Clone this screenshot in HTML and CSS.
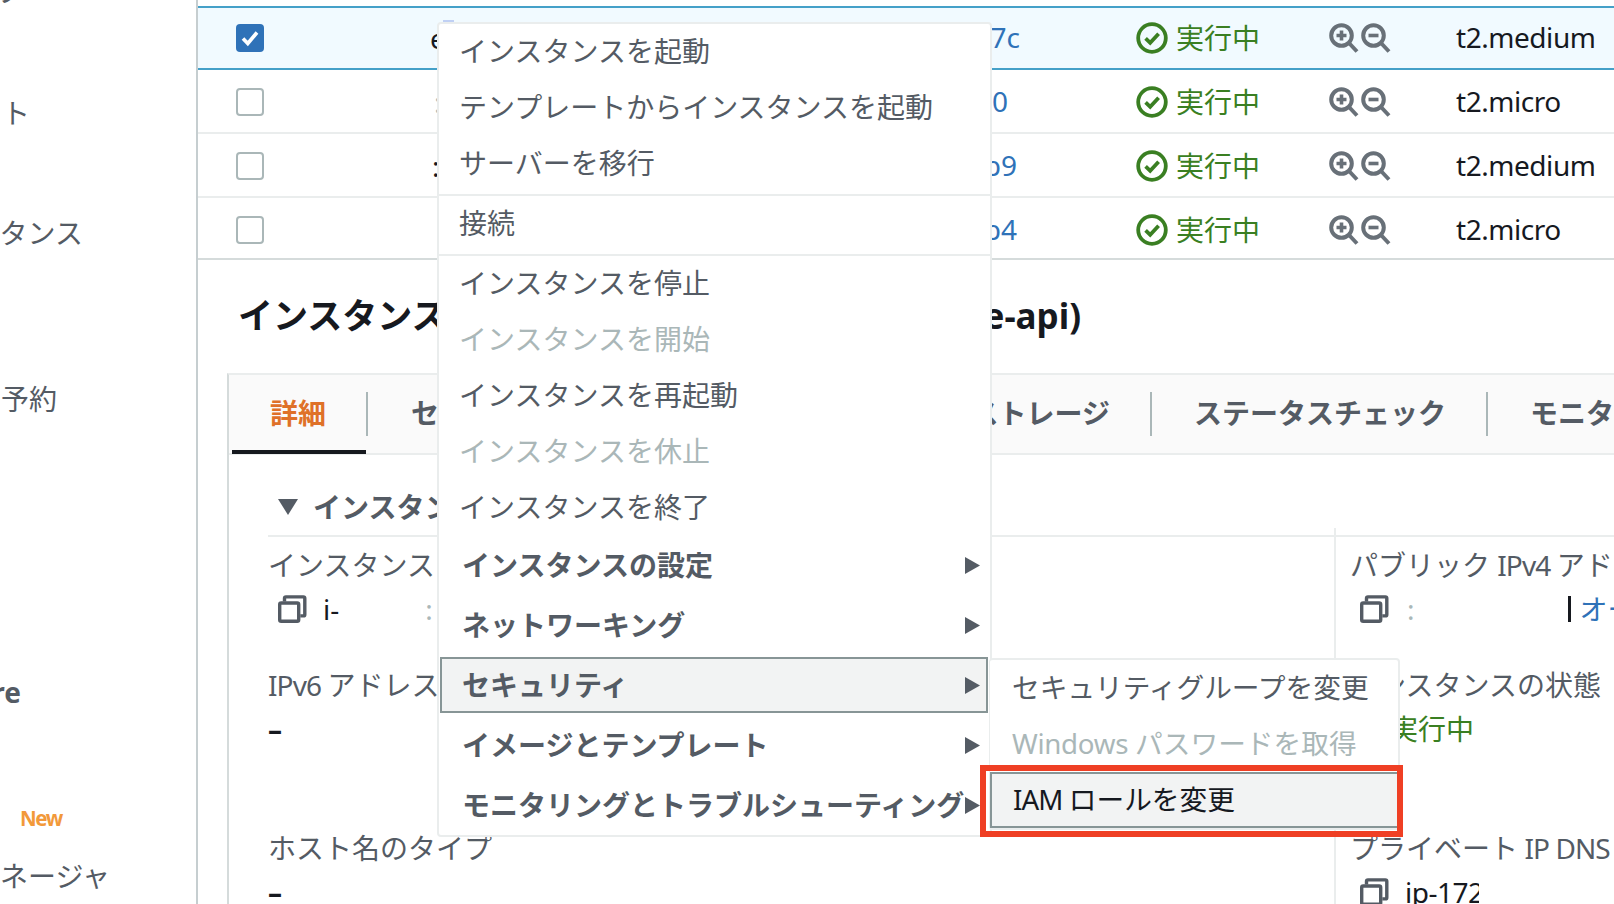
FILE: index.html
```html
<!DOCTYPE html>
<html lang="ja">
<head>
<meta charset="utf-8">
<title>EC2 インスタンス</title>
<link rel="stylesheet" href="styles.css">
</head>
<body>
<svg class="defs" width="0" height="0" aria-hidden="true">
  <symbol id="ok" viewBox="0 0 32 32"><circle cx="16" cy="16" r="13.8" fill="none" stroke="currentColor" stroke-width="3.8"/><path d="M9.600 16.400l4.600 4.400 8.400-9" fill="none" stroke="currentColor" stroke-width="3.800"/></symbol>
  <symbol id="zin" viewBox="0 0 30 30"><circle cx="12.500" cy="12.500" r="10.300" fill="none" stroke="currentColor" stroke-width="4"/><path d="M20 20l8 8.500" stroke="currentColor" stroke-width="4" fill="none"/><path d="M7.500 12.500h10M12.500 7.500v10" stroke="currentColor" stroke-width="3.600" fill="none"/></symbol>
  <symbol id="zout" viewBox="0 0 30 30"><circle cx="12.500" cy="12.500" r="10.300" fill="none" stroke="currentColor" stroke-width="4"/><path d="M20 20l8 8.500" stroke="currentColor" stroke-width="4" fill="none"/><path d="M7.500 12.500h10" stroke="currentColor" stroke-width="3.600" fill="none"/></symbol>
  <symbol id="copy" viewBox="0 0 29 28"><rect x="1.700" y="8" width="19" height="18.300" rx="1.500" fill="none" stroke="currentColor" stroke-width="3.400"/><path d="M6.500 6.500V3.400a1.500 1.500 0 0 1 1.500-1.500h17.300a1.500 1.500 0 0 1 1.500 1.500v16a1.500 1.500 0 0 1-1.500 1.500h-3" fill="none" stroke="currentColor" stroke-width="3.400"/></symbol>
  <symbol id="arrow" viewBox="0 0 15 17"><path d="M0 0l15 8.500L0 17z" fill="currentColor"/></symbol>
</svg>

<div class="page">
  <nav class="sidebar">
    <div class="nav n0 w24">インスタンスタイプ</div>
    <div class="nav n1 w30">スポットリクエスト</div>
    <div class="nav n2 w83">リザーブドインスタンス</div>
    <div class="nav n3 w57">キャパシティー予約</div>
    <div class="nav n4 w21 strong">Elastic Block Store</div>
    <div class="nav n5 new">New</div>
    <div class="nav n6 w110">ライフサイクルマネージャ</div>
  </nav>

  <main class="main">
    <section class="table">
      <div class="row selected">
        <div class="c-check"><span class="check on"><svg width="22" height="22" viewBox="0 0 22 22"><path d="M4 11.500l4.800 5L18 5.500" fill="none" stroke="#fff" stroke-width="3.600"/></svg></span></div>
        <div class="c-name"><span class="mark"></span>e</div>
        <div class="c-id end2">i-07c</div>
        <div class="c-status"><svg class="ok"><use href="#ok"/></svg>実行中</div>
        <div class="c-zoom"><svg class="z"><use href="#zin"/></svg><svg class="z"><use href="#zout"/></svg></div>
        <div class="c-type">t2.medium</div>
      </div>
      <div class="row">
        <div class="c-check"><span class="check"></span></div>
        <div class="c-name faint">:</div>
        <div class="c-id end14">i-010</div>
        <div class="c-status"><svg class="ok"><use href="#ok"/></svg>実行中</div>
        <div class="c-zoom"><svg class="z"><use href="#zin"/></svg><svg class="z"><use href="#zout"/></svg></div>
        <div class="c-type">t2.micro</div>
      </div>
      <div class="row">
        <div class="c-check"><span class="check"></span></div>
        <div class="c-name dots">:</div>
        <div class="c-id end5">i-0b9</div>
        <div class="c-status"><svg class="ok"><use href="#ok"/></svg>実行中</div>
        <div class="c-zoom"><svg class="z"><use href="#zin"/></svg><svg class="z"><use href="#zout"/></svg></div>
        <div class="c-type">t2.medium</div>
      </div>
      <div class="row last">
        <div class="c-check"><span class="check"></span></div>
        <div class="c-name"></div>
        <div class="c-id end5">i-0b4</div>
        <div class="c-status"><svg class="ok"><use href="#ok"/></svg>実行中</div>
        <div class="c-zoom"><svg class="z"><use href="#zin"/></svg><svg class="z"><use href="#zout"/></svg></div>
        <div class="c-type">t2.micro</div>
      </div>
    </section>

    <section class="detail">
      <h1 class="title"><span>インスタンス: i-0</span><span>(service-api)</span></h1>
      <div class="card">
        <div class="tabs">
          <div class="tab active">詳細</div>
          <div class="tab">セキュリティ</div>
          <div class="tab">ネットワーキング</div>
          <div class="tab">ストレージ</div>
          <div class="tab">ステータスチェック</div>
          <div class="tab">モニタリング</div>
          <div class="tab">タグ</div>
        </div>
        <div class="body">
          <h2 class="heading"><svg class="tri" width="20" height="16" viewBox="0 0 20 16"><path d="M0 0h20L10 16z" fill="currentColor"/></svg>インスタンスの概要</h2>
          <div class="fields">
            <div class="col left">
              <div class="field"><div class="label">インスタンス ID</div><div class="value"><svg class="copy"><use href="#copy"/></svg><span class="ink">i-</span><span class="gap-a">:</span></div></div>
              <div class="field"><div class="label"><span class="lat">IPv6 </span>アドレス</div><div class="value dash">–</div></div>
              <div class="field"><div class="label">ホスト名のタイプ</div><div class="value dash">–</div></div>
            </div>
            <div class="col right">
              <div class="field"><div class="label">パブリック <span class="lat">IPv4 </span>アドレス</div><div class="value"><svg class="copy"><use href="#copy"/></svg><span class="gap-b">:</span><span class="pipe"></span><a class="link">オープンアドレス</a></div></div>
              <div class="field"><div class="label">インスタンスの状態</div><div class="value green"><svg class="ok"><use href="#ok"/></svg>実行中</div></div>
              <div class="field"><div class="label">プライベート<span class="lat"> IP DNS </span>名</div><div class="value"><svg class="copy"><use href="#copy"/></svg><span class="clip ink">ip-172-31</span></div></div>
            </div>
          </div>
        </div>
      </div>
    </section>
  </main>
</div>

<div class="menu">
  <div class="group">
    <div class="item">インスタンスを起動</div>
    <div class="item">テンプレートからインスタンスを起動</div>
    <div class="item">サーバーを移行</div>
  </div>
  <div class="group">
    <div class="item">接続</div>
  </div>
  <div class="group">
    <div class="item">インスタンスを停止</div>
    <div class="item off">インスタンスを開始</div>
    <div class="item">インスタンスを再起動</div>
    <div class="item off">インスタンスを休止</div>
    <div class="item">インスタンスを終了</div>
  </div>
  <div class="parents">
    <div class="parent">インスタンスの設定<svg class="arrow"><use href="#arrow"/></svg></div>
    <div class="parent">ネットワーキング<svg class="arrow"><use href="#arrow"/></svg></div>
    <div class="parent open">セキュリティ<svg class="arrow"><use href="#arrow"/></svg></div>
    <div class="parent">イメージとテンプレート<svg class="arrow"><use href="#arrow"/></svg></div>
    <div class="parent">モニタリングとトラブルシューティング<svg class="arrow"><use href="#arrow"/></svg></div>
  </div>
</div>

<div class="submenu">
  <div class="item">セキュリティグループを変更</div>
  <div class="item off"><span class="lat2">Windows </span>パスワードを取得</div>
  <div class="item hover"><span class="lat">IAM </span>ロールを変更</div>
</div>
<div class="callout"></div>
</body>
</html>
```

FILE: styles.css
```css
* { box-sizing: border-box; }
html, body { margin: 0; height: 904px; overflow: hidden; background: #fff; }
body {
  position: relative;
  font-family: "Noto Sans", "Noto Sans CJK JP", sans-serif;
  font-size: 28px;
  line-height: 40px;
  color: #545b64;
}
.defs { position: absolute; }
svg { display: block; flex: none; }
.lat { letter-spacing: -0.9px; white-space: pre; }
.lat2 { letter-spacing: -0.3px; white-space: pre; }

.page { display: flex; height: 904px; width: 1614px; overflow: hidden; }

.sidebar { width: 196px; flex: none; overflow: hidden; display: flex; flex-direction: column; }
.nav { display: flex; justify-content: flex-end; white-space: nowrap; height: 40px; flex: none; }
.n0 { margin-top: -29px; }
.n1 { margin-top: 82px; }
.n2 { margin-top: 80px; }
.n3 { margin-top: 126px; }
.n4 { margin-top: 253px; }
.n5 { margin: 86px 0 0 20px; font-size: 20.500px; letter-spacing: -1.400px; font-weight: 700; color: #f2993a; justify-content: flex-start; }
.n6 { margin-top: 18px; }
.w21 { width: 21px; }
.w24 { width: 24px; }
.w30 { width: 30px; }
.w57 { width: 57px; }
.w83 { width: 83px; }
.w110 { width: 110px; }
.strong { font-weight: 700; }

.main { flex: 1; min-width: 0; border-left: 2px solid #c6ced0; overflow: hidden; }

/* table */
.table { padding-top: 6px; }
.row { display: flex; align-items: center; height: 64px; padding-top: 2px; border-bottom: 2px solid #eaeded; white-space: nowrap; }
.row.selected {
  margin-left: -2px;
  padding-top: 0;
  background: #f1faff;
  border: 2px solid #44a0c8;
  border-right: 0;
}
.row.last { height: 62px; padding-top: 4px; border-bottom-color: #d5dbdb; }
.c-check { width: 232px; flex: none; padding-left: 38px; }
.check { display: flex; align-items: center; justify-content: center; width: 28px; height: 28px; background: #fff; border: 2.500px solid #aab7b8; border-radius: 4px; }
.check.on { background: #2f72b8; border: 0; }
.c-name { position: relative; width: 370px; flex: none; color: #16191f; }
.c-name.faint { color: #aab7b8; padding-left: 4px; }
.c-name.dots { padding-left: 2px; }
.mark { position: absolute; left: 13px; top: 2px; width: 11px; height: 4px; background: #c0d0f4; }
.c-id { width: 222px; flex: none; padding-bottom: 2px; text-align: right; color: #2f72b8; }
.end2 { padding-right: 2px; }
.end14 { padding-right: 14px; }
.end5 { padding-right: 5px; }
.c-status { display: flex; align-items: center; gap: 8px; width: 193px; margin-left: 114px; flex: none; color: #3a7f22; }
.ok { width: 32px; height: 32px; color: #3a7f22; }
.c-zoom { display: flex; gap: 2px; width: 127px; flex: none; color: #687078; }
.z { width: 30px; height: 30px; }
.c-type { flex: none; padding-bottom: 2px; letter-spacing: -0.450px; color: #16191f; }

/* detail panel */
.detail { padding: 34px 0 0 29px; }
.title {
  display: flex;
  justify-content: space-between;
  width: 854px;
  margin: 0 0 35px;
  padding-left: 11px;
  font-size: 35px;
  line-height: 44px;
  font-weight: 700;
  color: #16191f;
  white-space: nowrap;
}
.card { width: 1500px; border-top: 2px solid #eaeded; border-left: 2px solid #d5dbdb; }
.tabs { display: flex; height: 80px; padding-bottom: 2px; background: #fafafa; border-bottom: 2px solid #eaeded; white-space: nowrap; }
.tab { position: relative; display: flex; align-items: center; padding: 0 42px; font-weight: 700; }
.tab:nth-child(n+3) { padding: 0 40px 0 44px; }
.tab::after { content: ""; position: absolute; right: -2px; top: 17px; width: 2px; height: 44px; background: #aab7b8; }
.tab.active { padding: 0 43px 0 41px; color: #df7128; }
.tab.active::after { right: 1px; }
.tab.active::before { content: ""; position: absolute; left: 3px; right: 3px; bottom: -3px; height: 4px; background: #16191f; }
.tab:last-child::after { display: none; }

.body { padding-left: 39px; }
.heading {
  display: flex;
  align-items: center;
  gap: 15px;
  height: 82px;
  margin: 0;
  padding: 32px 0 8px 10px;
  font-size: 28px;
  font-weight: 700;
  border-bottom: 2px solid #eaeded;
  white-space: nowrap;
}
.tri { color: #545b64; }
.fields { display: flex; margin-top: -9px; }
.col { display: grid; grid-template-rows: 120px 163px auto; padding-top: 17px; white-space: nowrap; }
.col.left { width: 1066px; flex: none; }
.col.right { flex: 1; padding-left: 14px; border-left: 2px solid #eaeded; }
.value { display: flex; align-items: center; height: 40px; margin-top: 4px; }
.dash { font-weight: 700; color: #16191f; }
.copy { width: 29px; height: 28px; margin-left: 10px; color: #545b64; }
.ink { color: #16191f; }
.col .value > .ink:nth-child(2) { margin-left: 16px; }
.gap-a { margin-left: 86px; color: #aab7b8; }
.gap-b { margin-left: 18px; color: #aab7b8; }
.pipe { width: 3px; height: 26px; margin-left: 153px; background: #16191f; }
.link { margin-left: 9px; color: #2f72b8; }
.green { gap: 8px; color: #3a7f22; }
.clip { display: block; width: 74px; overflow: hidden; letter-spacing: -0.500px; }

/* context menu */
.menu {
  position: absolute;
  left: 437px;
  top: 22px;
  width: 555px;
  padding-bottom: 2px;
  background: #fff;
  border: 2px solid #eaeded;
  border-radius: 4px;
  white-space: nowrap;
}
.group { padding-bottom: 2px; border-bottom: 2px solid #eaeded; }
.group:nth-child(3) { padding-bottom: 1px; border-bottom: 0; }
.item { display: flex; align-items: center; height: 56px; padding: 0 0 2px 20px; }
.item.off { color: #aab7b8; }
.parents { display: flex; flex-direction: column; gap: 4px; }
.parent { display: flex; align-items: center; justify-content: space-between; height: 56px; margin: 0 2px 0 1px; padding: 0 6px 0 20px; font-weight: 700; border: 2px solid transparent; }
.parent.open { background: #f2f3f3; border-color: #879596; }
.arrow { width: 15px; height: 17px; color: #545b64; }

.submenu {
  position: absolute;
  left: 989px;
  top: 658px;
  width: 411px;
  height: 172px;
  font-size: 27.700px;
  background: #fff;
  border: 2px solid #eaeded;
  border-left-width: 1px;
  border-radius: 4px;
  white-space: nowrap;
}
.submenu .item { padding-left: 22px; }
.submenu .item.hover { height: 56px; margin: 0 -1px 0 0; background: #f2f3f3; border: 2px solid #879596; color: #16191f; padding: 0 0 2px 21px; }

.callout { position: absolute; left: 980px; top: 765px; width: 423px; height: 72px; border: 6px solid #ef3f24; }
```
